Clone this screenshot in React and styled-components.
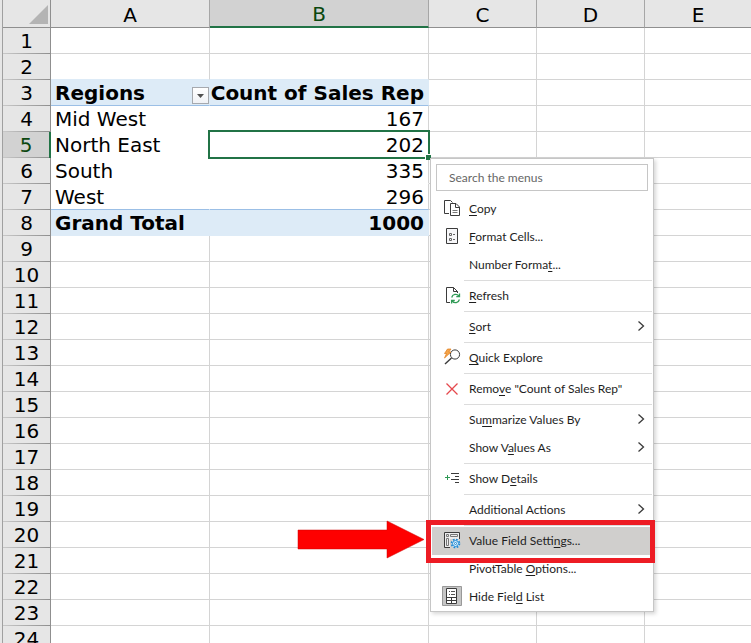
import { Fragment } from "react";
import styled, { createGlobalStyle, css } from "styled-components";

const GlobalStyle = createGlobalStyle`
  *, *::before, *::after {
    box-sizing: border-box;
  }

  body {
    margin: 0;
    background: #fff;
  }
`;

const Page = styled.main`
  position: relative;
  height: 100vh;
  padding-left: 2px;
  overflow: hidden;
  background: #e6e6e6;
  color: #000;
  font-family: Verdana, "DejaVu Sans", sans-serif;
`;

/* ---------- sheet ---------- */

const Sheet = styled.table`
  width: 100%;
  table-layout: fixed;
  border-collapse: separate;
  border-spacing: 0;
  border-left: 1px solid #a0a0a0;
  background: #fff;
  font-size: 20px;
  line-height: 24px;
`;

const Col = styled.col`
  width: ${(props) => props.$width};
`;

const Corner = styled.td`
  height: 28px;
  padding: 0;
  background: #e6e6e6;
  border-right: 1px solid #8f8f8f;
  border-bottom: 1px solid #8f8f8f;

  svg {
    display: block;
    margin: 2px 2px 0 auto;
  }
`;

const ColHead = styled.th`
  height: 28px;
  padding: 2px 0 0;
  font-weight: normal;
  background: #e6e6e6;
  border-right: 1px solid #a6a6a6;
  border-bottom: 1px solid #8f8f8f;

  &:last-child {
    border-right: 0;
  }

  ${(props) =>
    props.$active &&
    css`
      color: #0b470f;
      background: #d2d2d2;
      border-bottom: 2px solid #217346;
    `}
`;

const RowHead = styled.th`
  height: 26px;
  padding: 0;
  font-weight: normal;
  border-right: 1px solid #8f8f8f;
  background: linear-gradient(to right, #c8c8c8, #8f8f8f) bottom / 100% 1px
    no-repeat #e6e6e6;

  ${(props) =>
    props.$active &&
    css`
      color: #0b470f;
      background-color: #d2d2d2;
      border-right: 2px solid #217346;
    `}
`;

const Cell = styled.td`
  position: relative;
  height: 26px;
  padding: 0 4px;
  white-space: nowrap;
  border-right: 1px solid #d4d4d4;
  border-bottom: 1px solid #d4d4d4;

  &:last-child {
    border-right: 0;
  }

  ${(props) =>
    props.$pivot &&
    css`
      padding-left: ${props.$numeric ? "0" : "4px"};
      text-align: ${props.$numeric ? "right" : "left"};
      border-right-color: ${props.$numeric ? "#d4d4d4" : "#fff"};
      border-bottom-color: #fff;
    `}

  ${(props) =>
    props.$band &&
    css`
      font-weight: bold;
      background: #ddebf7;
      border-right-color: #ddebf7;
      border-bottom-color: #ddebf7;
    `}

  ${(props) => props.$edge && `border-bottom-color: ${props.$edge};`}
`;

const FieldHeader = styled.div`
  display: flex;
  align-items: flex-end;
  justify-content: space-between;
  height: 25px;
  margin-right: -4px;
`;

const FilterButton = styled.button`
  display: flex;
  align-items: center;
  justify-content: center;
  width: 17px;
  height: 17px;
  margin-bottom: 1px;
  padding: 0;
  border: 1px solid #a6a9ae;
  background: linear-gradient(#fff, #f0f2f6);
`;

const Selection = styled.div`
  position: absolute;
  inset: -2px;
  z-index: 1;
  border: 2px solid #217346;
  pointer-events: none;

  &::after {
    content: "";
    position: absolute;
    right: -3px;
    bottom: -3px;
    width: 6px;
    height: 6px;
    background: #217346;
    border: solid #fff;
    border-width: 1px 0 0 1px;
  }
`;

/* ---------- context menu ---------- */

const Menu = styled.div`
  position: absolute;
  left: 430px;
  top: 158px;
  z-index: 2;
  width: 224px;
  padding-top: 5px;
  background: #fff;
  border: 1px solid #c6c6c6;
  box-shadow: 2px 2px 4px rgba(0, 0, 0, 0.16);
  font-family: "Segoe UI", Lato, "Open Sans", sans-serif;
  font-size: 12px;
  color: #1e1e1e;
`;

const Search = styled.input`
  display: block;
  width: 212px;
  height: 27px;
  margin: 0 5px 4px;
  padding: 0 12px;
  border: 1px solid #c6c6c6;
  border-radius: 0;
  background: #fff;
  font: inherit;
  color: inherit;

  &::placeholder {
    color: #666;
    opacity: 1;
  }
`;

const Item = styled.button`
  display: flex;
  align-items: center;
  gap: 5px;
  width: 218px;
  height: 28px;
  margin: 0 3px 0 1px;
  padding: 0 5px 0 8px;
  border: 0;
  background: ${(props) => (props.$active ? "#d0cfcd" : "transparent")};
  font: inherit;
  line-height: 16px;
  color: inherit;
  text-align: left;
  white-space: nowrap;

  u {
    text-underline-offset: 2px;
    text-decoration-skip-ink: none;
  }
`;

const ItemIcon = styled.span`
  flex: none;
  width: 24px;
  height: 24px;

  svg {
    display: block;
  }
`;

const ItemLabel = styled.span`
  flex: 1;
`;

const Separator = styled.hr`
  height: 1px;
  margin: 1px 1px 1px 33px;
  border: 0;
  background: #dcdcdc;
`;

/* ---------- callout drawn over the sheet ---------- */

const Highlight = styled.div`
  position: absolute;
  left: 426px;
  top: 520px;
  z-index: 3;
  width: 229px;
  height: 43px;
  border: 5px solid #ed1c24;
  pointer-events: none;
`;

const Arrow = styled.svg`
  position: absolute;
  left: 297px;
  top: 520px;
  z-index: 3;
`;

const Svg = ({ children }) => (
  <svg width="24" height="24" fill="none" stroke="#3b3b3b" aria-hidden="true">
    {children}
  </svg>
);

const icons = {
  copy: (
    <Svg>
      <path d="M9 16.5H4.5v-13h6l2 2" />
      <path d="M10.5 6.5h5.5l3.5 3.5v8.5h-9z" fill="#fff" />
      <path d="M15.5 6.5v4h4" />
      <path d="M12.5 13.5h5M12.5 15.5h5" stroke="#777" />
    </Svg>
  ),
  cells: (
    <Svg>
      <path d="M6.5 3.5h11v15h-11z" fill="#f7f7f9" />
      <path d="M9.5 8.5h2v2h-2zM9.5 13.5h2v2h-2zM13 9.5h2M13 14.5h2" stroke="#666" />
    </Svg>
  ),
  refresh: (
    <Svg>
      <path d="M10 18.5H6.5v-15h7l4 4V9M13.5 3.5v4h4" />
      <g stroke="#2f9a55" strokeWidth="1.3">
        <path d="M11.7 13.5a4 4 0 0 1 7.1-1.5M19.5 9.5v3.2h-3.2" />
        <path d="M19.4 15.5a4 4 0 0 1-7.1 1.5M11.6 19.5v-3.2h3.2" />
      </g>
    </Svg>
  ),
  explore: (
    <Svg>
      <circle cx="15" cy="8.5" r="4.6" fill="#fff" />
      <path d="M11.5 12 5 18" strokeWidth="1.4" />
      <path d="M7.5 3H11L8.8 6H11l-6.5 6 2-4.5h-2z" fill="#f5a54a" stroke="#e07b1a" strokeWidth="0.7" />
    </Svg>
  ),
  remove: (
    <Svg>
      <path d="m6.5 6.5 11 11M17.5 6.5l-11 11" stroke="#e5484d" strokeWidth="1.3" />
    </Svg>
  ),
  details: (
    <Svg>
      <path d="M5 10.5h5M7.5 8v5" stroke="#2f9a55" />
      <path d="M11 6.5h8M15 9.5h4M11 12.5h8M15 15.5h4" />
    </Svg>
  ),
  settings: (
    <Svg>
      <path d="M4.5 3.5h15v15h-15z" fill="#ececec" />
      <path d="M6.5 5.5h2v2h-2zM10.5 5.5h7v2h-7zM6.5 9.5h2v7h-2z" stroke="#777" />
      <path d="M10 10h10.5v10H10z" fill="#d0cfcd" stroke="none" />
      <circle cx="15.5" cy="14.5" r="4" fill="#fff" stroke="#1e88d2" strokeWidth="1.6" strokeDasharray="1.8 1.34" />
      <circle cx="15.5" cy="14.5" r="3" fill="#d5ebfa" stroke="#1e88d2" />
      <circle cx="15.5" cy="14.5" r="1" fill="#fff" stroke="#1e88d2" />
    </Svg>
  ),
  list: (
    <Svg>
      <path d="M2.5 1.5h19v19h-19z" fill="#c6c6c6" stroke="#999" />
      <path d="M6.5 3.5h10v15h-10z" fill="#fff" />
      <path d="M6.5 12.5h10M6.5 15.5h10M11.5 12.5v6" />
      <path d="M9 6.5h1M11 6.5h4M9 9.5h1M11 9.5h4" stroke="#555" />
    </Svg>
  ),
};

const Chevron = () => (
  <svg width="8" height="12" fill="none" stroke="#3b3b3b" strokeWidth="1.3" aria-hidden="true">
    <path d="m1.5 0.5 5 4.5-5 4.5" />
  </svg>
);

// each group is followed by a separator, "_" marks the access key
const groups = [
  [
    { label: "_Copy", icon: "copy" },
    { label: "_Format Cells...", icon: "cells" },
    { label: "Number Forma_t..." },
  ],
  [{ label: "_Refresh", icon: "refresh" }],
  [{ label: "_Sort", submenu: true }],
  [{ label: "_Quick Explore", icon: "explore" }],
  [{ label: 'Remo_ve "Count of Sales Rep"', icon: "remove" }],
  [
    { label: "Su_mmarize Values By", submenu: true },
    { label: "Show V_alues As", submenu: true },
  ],
  [{ label: "Show D_etails", icon: "details" }],
  [{ label: "Additional Act_ions", submenu: true }],
  [
    { label: "Value Field Setti_ngs...", icon: "settings", active: true },
    { label: "PivotTable _Options..." },
    { label: "Hide Fiel_d List", icon: "list" },
  ],
];

const columns = ["A", "B", "C", "D", "E"];

const pivot = {
  3: ["Regions", "Count of Sales Rep"],
  4: ["Mid West", "167"],
  5: ["North East", "202"],
  6: ["South", "335"],
  7: ["West", "296"],
  8: ["Grand Total", "1000"],
};

const edges = { 2: "#ddebf7", 3: "#9bbfe6", 7: "#9bbfe6" };

const AccessLabel = ({ text }) => {
  const at = text.indexOf("_");
  return (
    <ItemLabel>
      {text.slice(0, at)}
      <u>{text[at + 1]}</u>
      {text.slice(at + 2)}
    </ItemLabel>
  );
};

const SheetRow = ({ row }) => {
  const values = pivot[row];
  return (
    <tr>
      <RowHead scope="row" $active={row === 5}>
        {row}
      </RowHead>
      {columns.map((name, i) => {
        const inPivot = Boolean(values) && i < 2;
        return (
          <Cell
            key={name}
            $pivot={inPivot}
            $numeric={i === 1}
            $band={inPivot && (row === 3 || row === 8)}
            $edge={i < 2 ? edges[row] : undefined}
          >
            {row === 3 && i === 0 ? (
              <FieldHeader>
                {values[0]}
                <FilterButton aria-label="Filter Regions">
                  <svg width="7" height="4" aria-hidden="true">
                    <path d="M0 0h7L3.5 4z" fill="#505050" />
                  </svg>
                </FilterButton>
              </FieldHeader>
            ) : (
              inPivot && values[i]
            )}
            {row === 5 && i === 1 && <Selection />}
          </Cell>
        );
      })}
    </tr>
  );
};

const ContextMenu = () => (
  <Menu>
    <Search type="text" placeholder="Search the menus" aria-label="Search the menus" />
    {groups.map((items, i) => (
      <Fragment key={items[0].label}>
        {i > 0 && <Separator />}
        {items.map((item) => (
          <Item key={item.label} type="button" $active={item.active}>
            <ItemIcon>{icons[item.icon]}</ItemIcon>
            <AccessLabel text={item.label} />
            {item.submenu && <Chevron />}
          </Item>
        ))}
      </Fragment>
    ))}
  </Menu>
);

const App = () => {
  const rows = Array.from({ length: 24 }, (_, i) => i + 1);
  return (
    <Page>
      <GlobalStyle />
      <Sheet>
        <colgroup>
          <Col $width="48px" />
          <Col $width="159px" />
          <Col $width="219px" />
          <Col $width="108px" />
          <Col $width="108px" />
          <Col $width="auto" />
        </colgroup>
        <thead>
          <tr>
            <Corner>
              <svg width="19" height="19" aria-hidden="true">
                <path d="M19 0v19H0z" fill="#b4b4b4" />
              </svg>
            </Corner>
            {columns.map((name) => (
              <ColHead key={name} scope="col" $active={name === "B"}>
                {name}
              </ColHead>
            ))}
          </tr>
        </thead>
        <tbody>
          {rows.map((row) => (
            <SheetRow key={row} row={row} />
          ))}
        </tbody>
      </Sheet>
      <ContextMenu />
      <Highlight />
      <Arrow width="128" height="39" aria-hidden="true">
        <path d="M1 10h89V1l37 18.5L90 38v-9H1z" fill="#fe0000" stroke="#c00" strokeWidth="0.5" />
      </Arrow>
    </Page>
  );
};

export default App;
